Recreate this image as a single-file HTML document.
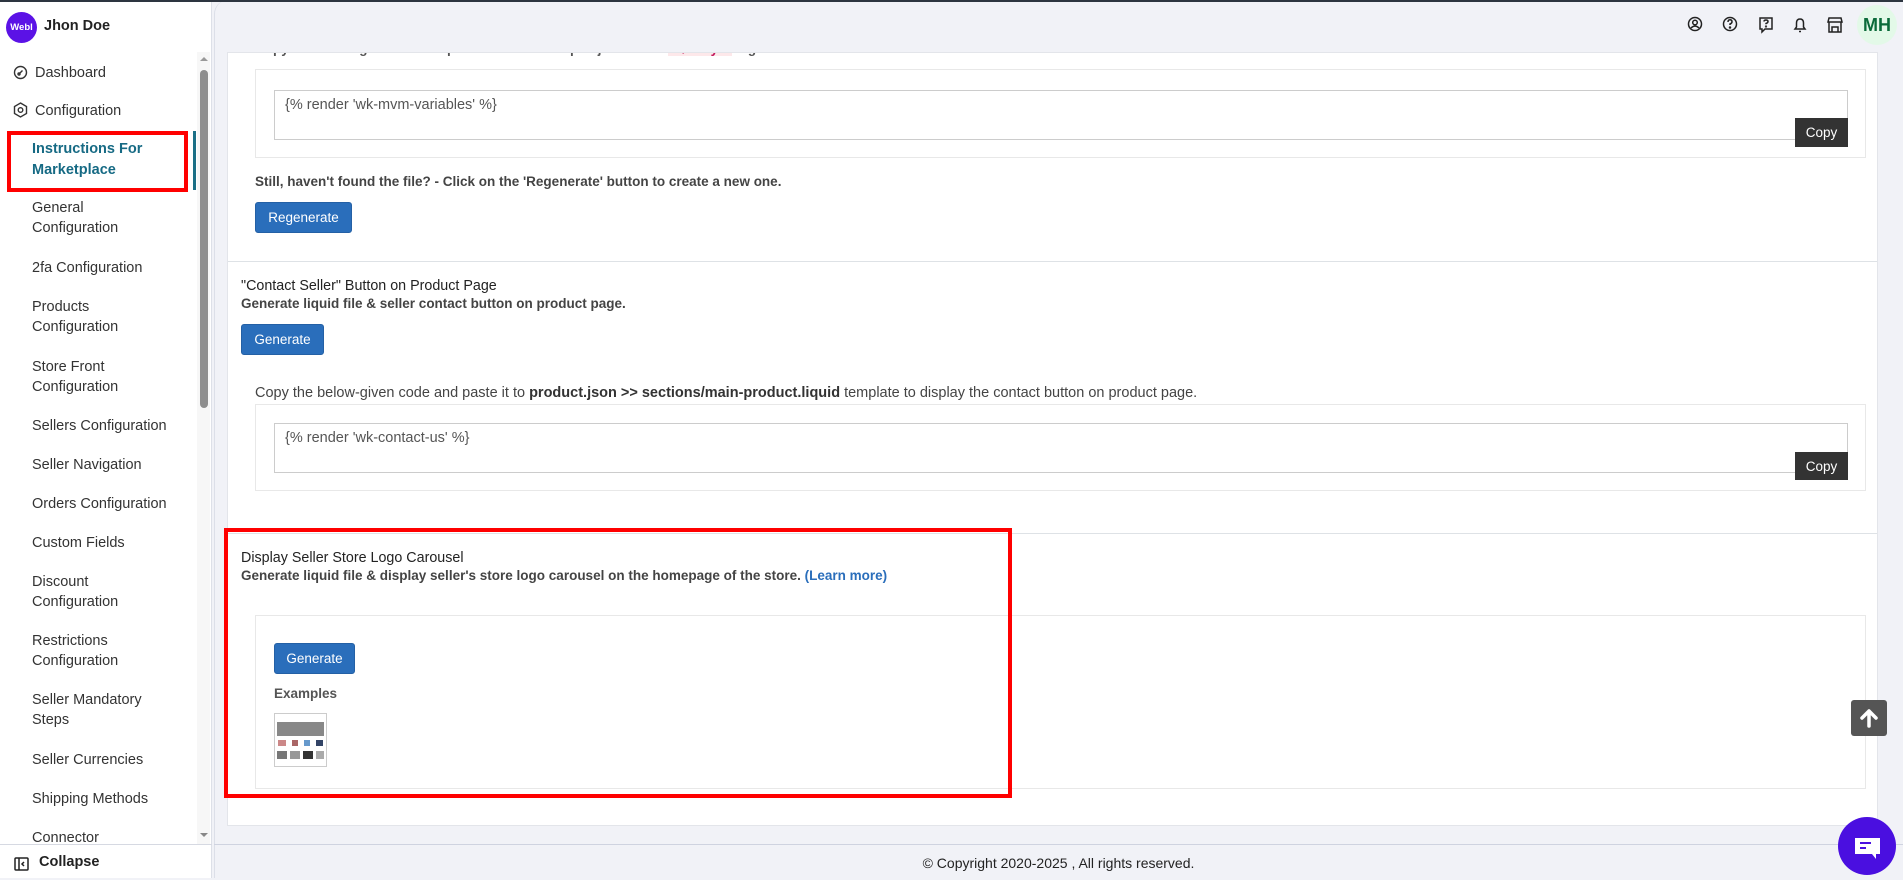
<!DOCTYPE html>
<html><head><meta charset="utf-8"><style>
*{box-sizing:border-box;margin:0;padding:0}
body{width:1903px;height:878px;overflow:hidden;background:#f1f2f7;font-family:"Liberation Sans",sans-serif;position:relative}
.abs{position:absolute}
.side{left:0;top:0;width:212px;height:878px;background:#fff;border-right:1px solid #dde0e8}
.nav{position:absolute;left:32px;font-size:14.5px;color:#333;line-height:20px;white-space:nowrap}
.main-bg{left:214px;top:0;width:1689px;height:878px;background:#f1f2f7;border-left:1px solid #dcdfe8;border-radius:14px 0 0 0}
.card{left:227px;top:52px;width:1651px;height:774px;background:#fff;border:1px solid #e3e5ea;overflow:hidden}
.t{position:absolute;white-space:nowrap;font-size:13.5px}
.ttl{font-size:14.3px;color:#222}
.code{font-size:14.5px;color:#555}
.b{font-weight:bold;color:#444}
.btn{position:absolute;background:#2a6ebb;color:#fff;border-radius:3px;font-size:13.5px;display:flex;align-items:center;justify-content:center;border:1px solid #2460a5}
.box{position:absolute;border:1px solid #e8e8e8}
.ta{position:absolute;border:1px solid #ccc;background:#fff}
.copy{position:absolute;background:#333;color:#fff;font-size:13.5px;display:flex;align-items:center;justify-content:center}
.hr{position:absolute;left:0;width:1651px;height:1px;background:#dee2e6}
</style></head><body>
<div class="abs" style="left:0;top:0;width:1903px;height:2px;background:#2d3540;z-index:9"></div>
<div class="abs main-bg"></div>
<div class="abs card">
  <div class="t b" style="left:27px;top:-12px;color:#555">Copy the below-given code &amp; paste it to theme.liquid just above <span style="background:#fde8ea;color:#c2185b;padding:0 6px">&lt;/body&gt;</span> tag.</div>
  <div class="box" style="left:27px;top:16px;width:1611px;height:89px"></div>
  <div class="ta" style="left:46px;top:37px;width:1574px;height:50px"></div>
  <div class="t code" style="left:57px;top:44px">{% render 'wk-mvm-variables' %}</div>
  <div class="copy" style="left:1567px;top:65px;width:53px;height:29px">Copy</div>
  <div class="t b" style="left:27px;top:121px">Still, haven't found the file? - Click on the 'Regenerate' button to create a new one.</div>
  <div class="btn" style="left:27px;top:149px;width:97px;height:31px">Regenerate</div>
  <div class="hr" style="top:208px"></div>
  <div class="t ttl" style="left:13px;top:225px">"Contact Seller" Button on Product Page</div>
  <div class="t b" style="left:13px;top:243px">Generate liquid file &amp; seller contact button on product page.</div>
  <div class="btn" style="left:13px;top:271px;width:83px;height:31px">Generate</div>
  <div class="t" style="left:27px;top:332px;font-size:14.5px;color:#444">Copy the below-given code and paste it to <b style="color:#333">product.json &gt;&gt; sections/main-product.liquid</b> template to display the contact button on product page.</div>
  <div class="box" style="left:27px;top:351px;width:1611px;height:87px"></div>
  <div class="ta" style="left:46px;top:370px;width:1574px;height:50px"></div>
  <div class="t code" style="left:57px;top:377px">{% render 'wk-contact-us' %}</div>
  <div class="copy" style="left:1567px;top:399px;width:53px;height:28px">Copy</div>
  <div class="hr" style="top:480px"></div>
  <div class="t ttl" style="left:13px;top:497px">Display Seller Store Logo Carousel</div>
  <div class="t b" style="left:13px;top:515px">Generate liquid file &amp; display seller's store logo carousel on the homepage of the store. <span style="color:#2a6ebb">(Learn more)</span></div>
  <div class="box" style="left:27px;top:562px;width:1611px;height:174px"></div>
  <div class="btn" style="left:46px;top:590px;width:81px;height:31px">Generate</div>
  <div class="t b" style="left:46px;top:633px;color:#555">Examples</div>
  <div class="abs" style="left:46px;top:660px;width:53px;height:54px;border:1px solid #ccc;background:#fff">
    <div class="abs" style="left:2px;top:8px;width:47px;height:14px;background:#888"></div>
    <div class="abs" style="left:3px;top:26px;width:45px;height:6px;background:linear-gradient(90deg,#c88 0 8px,#fff 8px 14px,#a66 14px 20px,#fff 20px 26px,#69c 26px 32px,#fff 32px 38px,#346 38px)"></div>
    <div class="abs" style="left:2px;top:37px;width:47px;height:8px;background:linear-gradient(90deg,#777 0 10px,#fff 10px 13px,#999 13px 23px,#fff 23px 26px,#333 26px 36px,#fff 36px 39px,#aaa 39px)"></div>
  </div>
</div>
<div class="abs" style="left:224px;top:528px;width:788px;height:270px;border:4px solid #f00"></div>
<div class="abs" style="left:214px;top:844px;width:1689px;height:1px;background:#cfd3e0"></div>
<div class="abs" style="left:0;top:855px;width:1903px;text-align:center;padding-left:214px;font-size:14px;color:#222">© Copyright 2020-2025 , All rights reserved.</div>
<div class="abs" style="left:1851px;top:700px;width:36px;height:36px;background:#555;border-radius:3px"><svg width="36" height="36" viewBox="0 0 36 36"><path d="M18 11 L11 18 M18 11 L25 18 M18 11 V26" stroke="#fff" stroke-width="3.5" fill="none" stroke-linecap="round"/></svg></div>
<div class="abs" style="left:1838px;top:817px;width:58px;height:58px;border-radius:50%;background:#4a0fe0"><svg width="58" height="58" viewBox="0 0 58 58"><path d="M17 21 h25 v16 h-4 v5 l-4 -5 h-17 z" fill="#fff"/><rect x="22" y="25" width="11" height="2" fill="#4a0fe0"/><rect x="22" y="30" width="6" height="2" fill="#4a0fe0"/></svg></div>

<svg class="abs" style="left:1686px;top:15px" width="160" height="20" viewBox="0 0 160 20" fill="none" stroke="#222" stroke-width="1.5">
<circle cx="9" cy="9" r="6.5"/><circle cx="9" cy="7.5" r="2.3"/><path d="M5 13 q4 -4 8 0"/>
<circle cx="44" cy="9" r="6.5"/><path d="M42 7 q0 -2.3 2 -2.3 q2 0 2 2 q0 1.5 -2 2.3 v1"/><circle cx="44" cy="12.5" r="0.5" fill="#222"/>
<path d="M74 3 h12 v11 h-7 l-3 3 v-3 h-2 z"/><path d="M78 6.5 q0 -1.5 2 -1.5 q2 0 2 1.5 q0 1.3 -2 2 v0.8"/><circle cx="80" cy="11.5" r="0.4" fill="#222"/>
<path d="M109 14 h10 l-1.5 -2 v-4 q0 -4 -3.5 -4 q-3.5 0 -3.5 4 v4 z"/><path d="M113 16.5 h2"/>
<path d="M143 3 h12 l1 4 h-14 z M143 7 v10 h12 v-10 M146 17 v-5 h6 v5"/>
</svg>
<div class="abs" style="left:1857px;top:5px;width:40px;height:40px;border-radius:50%;background:#e3f9e8;color:#0b6b3a;font-weight:bold;font-size:18px;display:flex;align-items:center;justify-content:center">MH</div>

<div class="abs side">
  <div class="abs" style="left:6px;top:12px;width:31px;height:31px;border-radius:50%;background:#5b12e6;color:#fff;font-size:9.5px;font-weight:bold;display:flex;align-items:center;justify-content:center;overflow:hidden">Webl</div>
  <div class="abs" style="left:44px;top:18px;font-size:14.5px;font-weight:bold;color:#222">Jhon Doe</div>
  <svg class="abs" style="left:13px;top:65px" width="15" height="15" viewBox="0 0 15 15" fill="none" stroke="#333" stroke-width="1.4"><circle cx="7.5" cy="7.5" r="6"/><path d="M6 9 l3.5 -3.5"/><circle cx="6" cy="9" r="1"/></svg>
  <div class="nav" style="left:35px;top:63px">Dashboard</div>
  <svg class="abs" style="left:13px;top:102px" width="15" height="16" viewBox="0 0 15 16" fill="none" stroke="#333" stroke-width="1.4"><path d="M7.5 1 L13.5 4.5 V11.5 L7.5 15 L1.5 11.5 V4.5 Z"/><circle cx="7.5" cy="8" r="2.3"/></svg>
  <div class="nav" style="left:35px;top:101px">Configuration</div>
  <div class="nav" style="top:139px;color:#166a84;font-weight:bold;line-height:21px">Instructions For<br>Marketplace</div>
  <div class="abs" style="left:7px;top:131px;width:181px;height:61px;border:4px solid #f00"></div>
  <div class="abs" style="left:193px;top:131px;width:3px;height:59px;background:#1b6f86"></div>
  <div class="nav" style="top:198px">General<br>Configuration</div>
  <div class="nav" style="top:258px">2fa Configuration</div>
  <div class="nav" style="top:297px">Products<br>Configuration</div>
  <div class="nav" style="top:357px">Store Front<br>Configuration</div>
  <div class="nav" style="top:416px">Sellers Configuration</div>
  <div class="nav" style="top:455px">Seller Navigation</div>
  <div class="nav" style="top:494px">Orders Configuration</div>
  <div class="nav" style="top:533px">Custom Fields</div>
  <div class="nav" style="top:572px">Discount<br>Configuration</div>
  <div class="nav" style="top:631px">Restrictions<br>Configuration</div>
  <div class="nav" style="top:690px">Seller Mandatory<br>Steps</div>
  <div class="nav" style="top:750px">Seller Currencies</div>
  <div class="nav" style="top:789px">Shipping Methods</div>
  <div class="abs" style="left:0;top:828px;width:196px;height:15px;overflow:hidden"><div class="nav" style="top:0">Connector</div></div>
  <div class="abs" style="left:197px;top:52px;width:13px;height:792px;background:#f7f7f7"></div>
  <div class="abs" style="left:200px;top:70px;width:8px;height:338px;background:#8e8e8e;border-radius:4px"></div>
  <div class="abs" style="left:200px;top:57px;width:0;height:0;border:4px solid transparent;border-bottom-color:#999;border-top:0"></div>
  <div class="abs" style="left:200px;top:833px;width:0;height:0;border:4px solid transparent;border-top-color:#888;border-bottom:0"></div>
  <div class="abs" style="left:0;top:844px;width:212px;height:1px;background:#d6d9e2"></div>
  <svg class="abs" style="left:14px;top:857px" width="15" height="14" viewBox="0 0 15 14" fill="none" stroke="#222" stroke-width="1.5"><rect x="1" y="1" width="13" height="12" rx="1"/><path d="M5 1 v12 M10 5 l-2 2 l2 2"/></svg>
  <div class="abs" style="left:39px;top:854px;font-size:14.5px;font-weight:bold;color:#222">Collapse</div>
</div>
</body></html>
